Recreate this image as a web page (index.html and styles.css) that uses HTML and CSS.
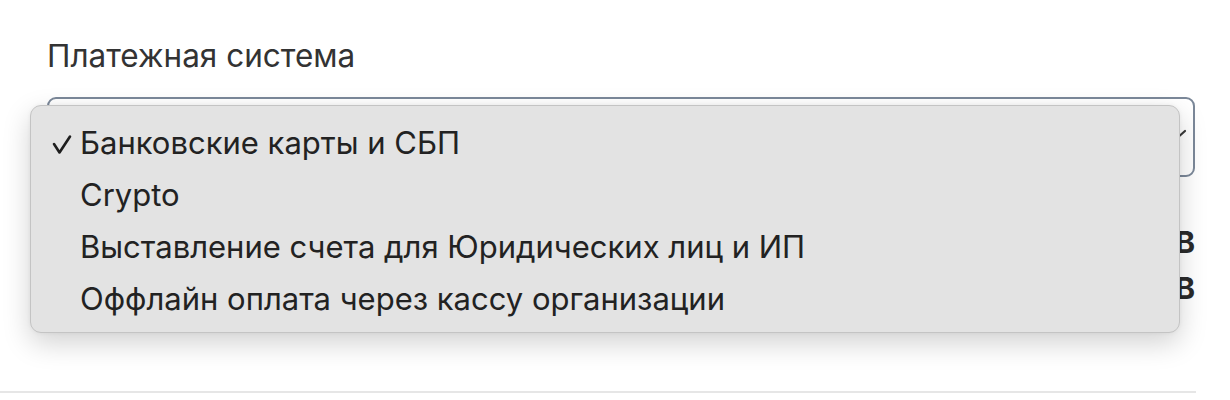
FILE: index.html
```html
<!DOCTYPE html>
<html lang="ru">
<head>
<meta charset="utf-8">
<title>Платежная система</title>
<link rel="stylesheet" href="styles.css">
</head>
<body>
<div class="page">
  <div class="field">
    <div class="label">Платежная система</div>
    <div class="select">
      <svg class="chevron" width="22" height="14" viewBox="0 0 22 14"><path d="M2 3 L11 11 L20 3" fill="none" stroke="#3a3a3a" stroke-width="2.2" stroke-linecap="round" stroke-linejoin="round"/></svg>
    </div>
    <div class="rows">
      <div class="row"><span class="value">В</span></div>
      <div class="row"><span class="value">В</span></div>
    </div>
  </div>
  <div class="divider"></div>

  <div class="menu">
    <div class="item selected">
      <svg class="check" width="20" height="22" viewBox="0 0 20 22"><path d="M2 10 L7.5 18.5 L18 2.5" fill="none" stroke="#1e1e1e" stroke-width="2.6" stroke-linecap="round" stroke-linejoin="round"/></svg>
      <span>Банковские карты и СБП</span>
    </div>
    <div class="item"><span>Crypto</span></div>
    <div class="item"><span>Выставление счета для Юридических лиц и ИП</span></div>
    <div class="item"><span>Оффлайн оплата через кассу организации</span></div>
  </div>
</div>
</body>
</html>
```

FILE: styles.css
```css
html, body {
  margin: 0;
  padding: 0;
  background: #ffffff;
}

body {
  font-family: Inter, "Liberation Sans", Arial, sans-serif;
  color: #2b2b2b;
  width: 1230px;
  height: 400px;
  overflow: hidden;
}

.page {
  position: relative;
  width: 1230px;
  height: 400px;
}

.field {
  padding: 38px 35px 0 47px;
}

.label {
  font-size: 31.5px;
  line-height: 35px;
  color: #333333;
}

.select {
  margin-top: 24px;
  height: 76px;
  border: 2px solid #7b8899;
  border-radius: 9px;
  background: #ffffff;
  display: flex;
  align-items: center;
  justify-content: flex-end;
  padding-right: 6px;
}

.chevron {
  display: block;
  margin-top: -4px;
}

.rows {
  margin-top: 42px;
  display: flex;
  flex-direction: column;
}

.row {
  display: flex;
  justify-content: flex-end;
  height: 46px;
  line-height: 46px;
}

.value {
  font-size: 30px;
  font-weight: 700;
  color: #2a2a2a;
}

.divider {
  position: absolute;
  left: 0;
  top: 391px;
  width: 1196px;
  height: 2px;
  background: #e6e6e6;
}

.menu {
  position: absolute;
  left: 30px;
  top: 105px;
  width: 1148px;
  height: 215px;
  background: #e3e3e3;
  border: 1px solid #c4c4c4;
  border-radius: 11px;
  box-shadow: 0 10px 28px rgba(0, 0, 0, 0.18), 0 0 4px rgba(0, 0, 0, 0.05);
  padding-top: 11px;
  box-sizing: content-box;
}

.item {
  position: relative;
  height: 52px;
  line-height: 52px;
  padding-left: 49px;
  font-size: 31px;
  color: #222222;
  white-space: nowrap;
}

.check {
  position: absolute;
  left: 21px;
  top: 17px;
}
```
